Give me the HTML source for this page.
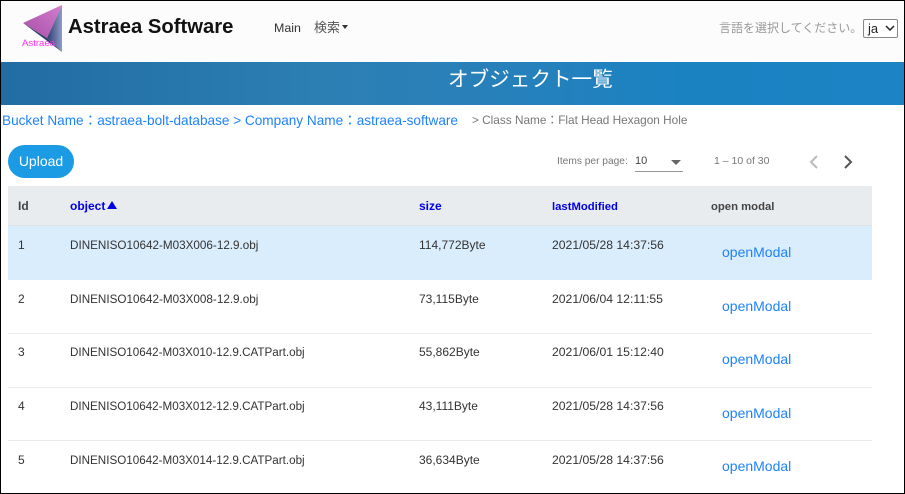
<!DOCTYPE html>
<html lang="ja"><head><meta charset="utf-8"><style>
html,body{margin:0;padding:0;background:#fff}
#p{position:relative;width:905px;height:494px;overflow:hidden;background:#fff;font-family:"Liberation Sans","Noto Sans CJK JP",sans-serif;color:#212529}
#p div{position:absolute;white-space:nowrap}
.t{font-size:12px;line-height:16px;color:#333}
.n{font-size:11.7px;line-height:16px;color:#333;margin-top:1px}
.c{font-size:11.65px;line-height:16px;color:#333;margin-top:1px}
.d{font-size:12.2px;line-height:16px;color:#333}
.h{font-size:12px;line-height:16px;font-weight:bold;color:#0000e6}
.s{font-size:11.3px;margin-top:1px}
.m{font-size:14px;line-height:18px;color:#1e82fb}
.l{height:1px;left:8px;width:864px;background:#e9ecef}
</style></head><body><div id="p">
<div style="left:0;top:0;width:905px;height:62px;background:#fcfcfc"></div>
<svg style="position:absolute;left:20px;top:3px" width="46" height="50" viewBox="0 0 46 50">
<defs><linearGradient id="g1" x1="0" y1="1" x2="1" y2="0"><stop offset="0" stop-color="#a44fa6"/><stop offset="1" stop-color="#d77ccf"/></linearGradient>
<linearGradient id="g2" x1="0" y1="0" x2="1" y2="0"><stop offset="0" stop-color="#2f3c74"/><stop offset="1" stop-color="#8c9cc6"/></linearGradient></defs>
<polygon points="3,20 42,2 27,35" fill="url(#g1)"/>
<polygon points="42,2 42,49 27,35" fill="url(#g2)"/>
<polygon points="3,20 27,35 42,49" fill="#33406f"/>
<text x="2" y="43" font-family="Liberation Sans" font-size="9.6" fill="#ff30f0">Astraea</text>
</svg>
<div style="left:68px;top:13px;font-size:20.25px;line-height:28px;font-weight:bold;color:#111">Astraea Software</div>
<div style="left:274px;top:19px;font-size:12.4px;line-height:18px;color:#333">Main</div>
<div style="left:314px;top:19px;font-size:13px;line-height:18px;color:#555">検索</div>
<div style="left:342px;top:25px;width:0;height:0;border-left:3.5px solid transparent;border-right:3.5px solid transparent;border-top:4px solid #333"></div>
<div style="left:719px;top:19px;font-size:12px;line-height:18px;color:#999">言語を選択してください。</div>
<div style="left:863px;top:19px;width:33px;height:17px;border:1px solid #888;border-radius:2px;background:#fff;font-size:13px;line-height:17px;color:#222;text-indent:4px">ja</div>
<svg style="position:absolute;left:885px;top:25px" width="10" height="6" viewBox="0 0 10 6"><path d="M1 1 L5 5 L9 1" fill="none" stroke="#222" stroke-width="1.5"/></svg>
<div style="left:0;top:62px;width:905px;height:43px;background:linear-gradient(90deg,#226ca3 0%,#2b7fb3 35%,#2a80b8 50%,#1b82c2 75%,#1c84c4 100%)"></div>
<div style="left:448px;top:66px;font-size:20.6px;line-height:27px;color:#fff">オブジェクト一覧</div>
<div style="left:2px;top:111px;font-size:13.6px;line-height:19px;color:#1e82fb">Bucket Name：astraea-bolt-database &gt; Company Name：astraea-software</div>
<div style="left:472px;top:112px;font-size:11.8px;line-height:16px;color:#777">&gt; Class Name：Flat Head Hexagon Hole</div>
<div style="left:8px;top:145px;width:66px;height:33px;border-radius:17px;background:#1a9be4;color:#fff;font-size:14px;line-height:32px;text-align:center">Upload</div>
<div style="left:557px;top:155px;font-size:10.2px;line-height:14px;color:#777">Items per page:</div>
<div style="left:635px;top:154px;font-size:11px;line-height:15px;color:#444">10</div>
<div style="left:671px;top:160px;width:0;height:0;border-left:5px solid transparent;border-right:5px solid transparent;border-top:5px solid #666"></div>
<div style="left:635px;top:171px;width:48px;height:1px;background:#999"></div>
<div style="left:714px;top:154px;font-size:10.5px;line-height:14px;color:#777">1 – 10 of 30</div>
<svg style="position:absolute;left:806px;top:154px" width="50" height="16" viewBox="0 0 50 16"><path d="M11 2 L5 8 L11 14" fill="none" stroke="#bbb" stroke-width="2"/><path d="M39 2 L45 8 L39 14" fill="none" stroke="#555" stroke-width="2"/></svg>
<div style="left:8px;top:186px;width:864px;height:40px;background:#e9ecef"></div>
<div class="l" style="top:225px;background:#dee2e6"></div>
<div style="left:8px;top:226px;width:864px;height:54px;background:#d9edfd"></div>
<div class="l" style="top:333px"></div><div class="l" style="top:387px"></div><div class="l" style="top:440px"></div>
<div class="h" style="left:18px;top:198px;color:#444">Id</div>
<div class="h" style="left:70px;top:198px">object</div>
<div style="left:107px;top:201px;width:0;height:0;border-left:5px solid transparent;border-right:5px solid transparent;border-bottom:8px solid #0000e6"></div>
<div class="h" style="left:419px;top:198px">size</div>
<div class="h s" style="left:552px;top:198px">lastModified</div>
<div class="h s" style="left:711px;top:198px;color:#444">open modal</div>

<div class="t" style="left:18px;top:237px">1</div><div class="n" style="left:70px;top:237px">DINENISO10642-M03X006-12.9.obj</div><div class="t" style="left:419px;top:237px">114,772Byte</div><div class="d" style="left:552px;top:237px">2021/05/28 14:37:56</div><div class="m" style="left:722px;top:243px">openModal</div>
<div class="t" style="left:18px;top:291px">2</div><div class="n" style="left:70px;top:291px">DINENISO10642-M03X008-12.9.obj</div><div class="t" style="left:419px;top:291px">73,115Byte</div><div class="d" style="left:552px;top:291px">2021/06/04 12:11:55</div><div class="m" style="left:722px;top:297px">openModal</div>
<div class="t" style="left:18px;top:344px">3</div><div class="c" style="left:70px;top:344px">DINENISO10642-M03X010-12.9.CATPart.obj</div><div class="t" style="left:419px;top:344px">55,862Byte</div><div class="d" style="left:552px;top:344px">2021/06/01 15:12:40</div><div class="m" style="left:722px;top:350px">openModal</div>
<div class="t" style="left:18px;top:398px">4</div><div class="c" style="left:70px;top:398px">DINENISO10642-M03X012-12.9.CATPart.obj</div><div class="t" style="left:419px;top:398px">43,111Byte</div><div class="d" style="left:552px;top:398px">2021/05/28 14:37:56</div><div class="m" style="left:722px;top:404px">openModal</div>
<div class="t" style="left:18px;top:452px">5</div><div class="c" style="left:70px;top:452px">DINENISO10642-M03X014-12.9.CATPart.obj</div><div class="t" style="left:419px;top:452px">36,634Byte</div><div class="d" style="left:552px;top:452px">2021/05/28 14:37:56</div><div class="m" style="left:722px;top:457px">openModal</div>
<div style="left:0;top:0;width:903px;height:492px;border:1px solid #000"></div>
</div></body></html>
